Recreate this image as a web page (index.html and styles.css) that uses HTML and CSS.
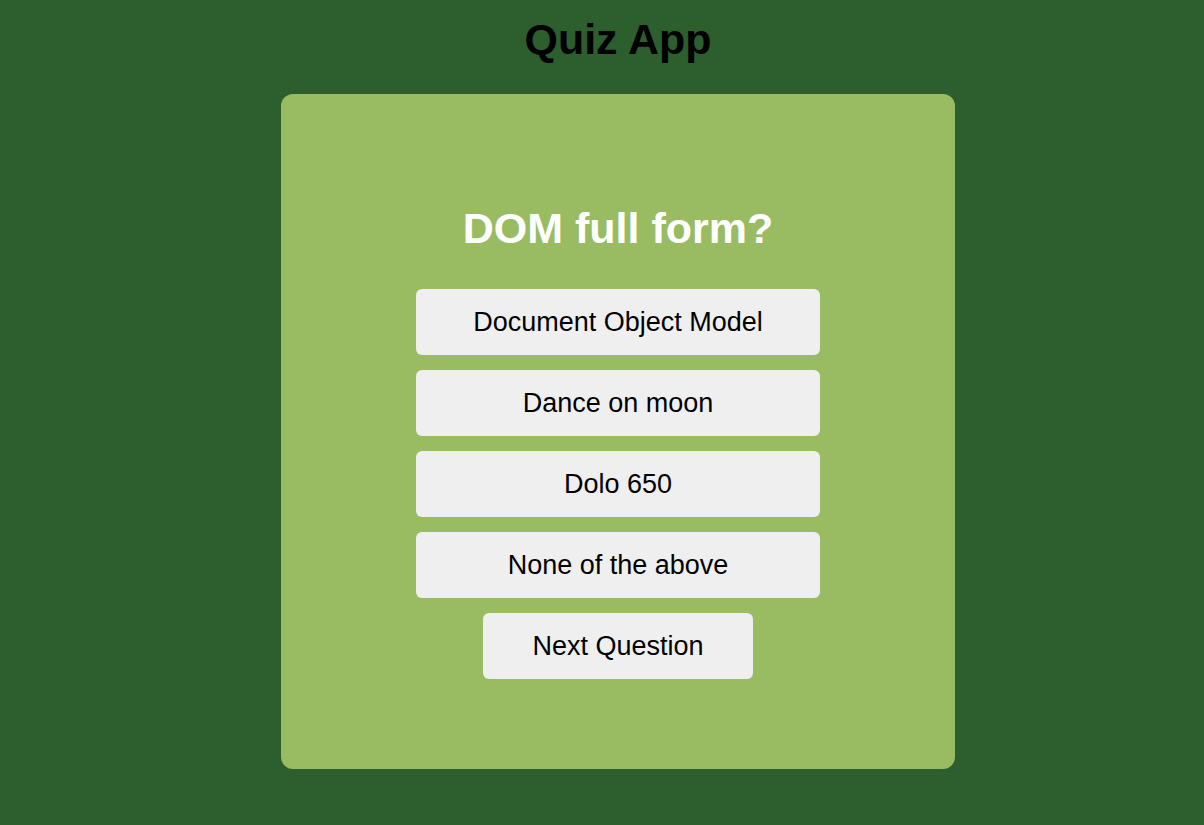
FILE: index.html
```html
<!DOCTYPE html>
<html lang="en">
<head>
<meta charset="utf-8">
<title>Quiz App</title>
<link rel="stylesheet" href="styles.css">
</head>
<body>
<main class="page">
  <h1 class="app-title">Quiz App</h1>
  <section class="quiz-card">
    <h2 class="question">DOM full form?</h2>
    <div class="answers">
      <button class="answer">Document Object Model</button>
      <button class="answer">Dance on moon</button>
      <button class="answer">Dolo 650</button>
      <button class="answer">None of the above</button>
      <button class="next">Next Question</button>
    </div>
  </section>
</main>
</body>
</html>
```

FILE: styles.css
```css
html, body {
  margin: 0;
  padding: 0;
  background: #2d5e2e;
  height: 100%;
  overflow: hidden;
}

.page {
  font-family: "Liberation Sans", Arial, sans-serif;
  display: flex;
  flex-direction: column;
  align-items: center;
  padding: 15px 0 0 32px;
}

.app-title {
  margin: 0 0 30px;
  font-size: 43px;
  font-weight: bold;
  color: #000;
  line-height: normal;
}

.quiz-card {
  box-sizing: border-box;
  width: 674px;
  height: 675px;
  background: #99bc63;
  border-radius: 12px;
  padding: 110px 0 0;
  display: flex;
  flex-direction: column;
  align-items: center;
}

.question {
  margin: 0 0 36px;
  font-size: 43px;
  font-weight: bold;
  color: #fff;
  line-height: normal;
}

.answers {
  width: 60%;
  display: flex;
  flex-direction: column;
  align-items: center;
  gap: 15px;
}

.answer,
.next {
  box-sizing: border-box;
  height: 66px;
  border: none;
  border-radius: 6px;
  background: #efefef;
  color: #000;
  font-family: "Liberation Sans", Arial, sans-serif;
  font-size: 27px;
  cursor: pointer;
}

.answer {
  width: 100%;
}

.next {
  padding: 0 49px;
}
```
